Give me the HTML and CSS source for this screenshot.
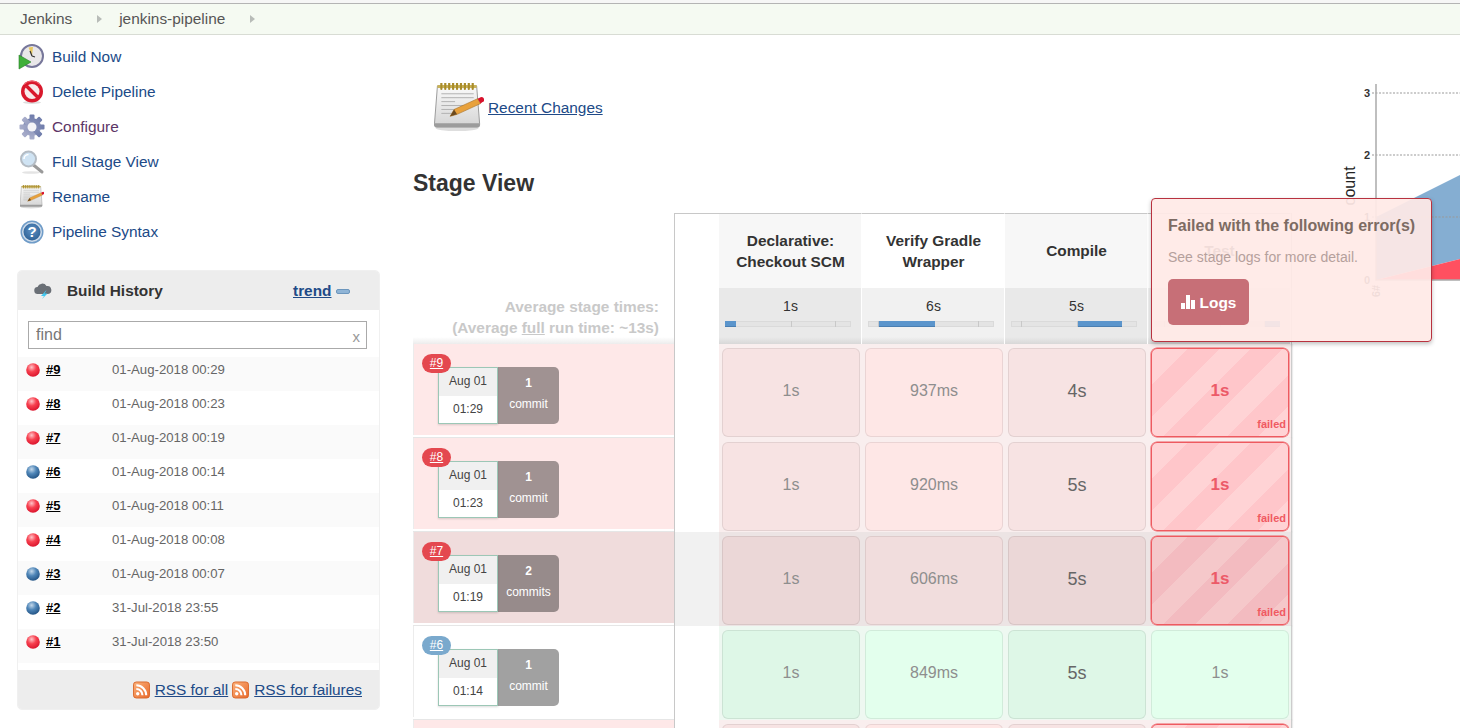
FILE: index.html
```html
<!DOCTYPE html>
<html lang="en">
<head>
<meta charset="utf-8">
<title>jenkins-pipeline</title>
<link rel="stylesheet" href="styles.css">
</head>
<body>
<svg class="defs" width="0" height="0" aria-hidden="true">
  <defs>
    <radialGradient id="ballRed" cx="40%" cy="30%" r="75%">
      <stop offset="0" stop-color="#ffc4c8"/><stop offset=".45" stop-color="#f7404f"/><stop offset="1" stop-color="#d8102a"/>
    </radialGradient>
    <radialGradient id="ballBlue" cx="40%" cy="30%" r="75%">
      <stop offset="0" stop-color="#c4d8ea"/><stop offset=".45" stop-color="#4f86b8"/><stop offset="1" stop-color="#1f4f80"/>
    </radialGradient>
    <linearGradient id="page" x1="0" y1="0" x2="0" y2="1">
      <stop offset="0" stop-color="#fafafa"/><stop offset="1" stop-color="#d4d4d4"/>
    </linearGradient>
    <linearGradient id="rssFill" x1="0" y1="0" x2="1" y2="1">
      <stop offset="0" stop-color="#fbb27c"/><stop offset="1" stop-color="#e8682a"/>
    </linearGradient>
    <linearGradient id="gearFill" x1="0" y1="0" x2="0" y2="1">
      <stop offset="0" stop-color="#6f7cab"/><stop offset="1" stop-color="#a9aecb"/>
    </linearGradient>
    <radialGradient id="helpFill" cx="50%" cy="40%" r="60%">
      <stop offset="0" stop-color="#5f93c6"/><stop offset="1" stop-color="#2f6296"/>
    </radialGradient>
    <symbol id="notepad" viewBox="0 0 50 50">
      <ellipse cx="23" cy="46" rx="22" ry="3" fill="#dedede"/>
      <path d="M3 3h40l3 38v2a2 2 0 0 1-2 2H2a2 2 0 0 1-2-2v-2z" fill="url(#page)" stroke="#9a9a9a"/>
      <path d="M0 41h46v2a2 2 0 0 1-2 2H2a2 2 0 0 1-2-2z" fill="#9c9c9c"/>
      <path d="M3 2h40v3H3z" fill="#c9b35a"/>
      <path d="M7 0v6M11 0v6M15 0v6M19 0v6M23 0v6M27 0v6M31 0v6M35 0v6M39 0v6" stroke="#a98c2a" stroke-width="2.2" stroke-linecap="round"/>
      <path d="M7 11h33M7 15h33M7 19h14M7 23h33M7 27h24M7 31h14" stroke="#b0b0b0" stroke-width="1"/>
      <path d="M16 34l4-7L44 16l3 5-24 11z" fill="#e8a13c" stroke="#a56b1e" stroke-width=".6"/>
      <path d="M16 34l4-7 3 5z" fill="#6b4a20"/>
      <path d="M44 16l3-1.500a2.600 2.600 0 0 1 2 5L47 21z" fill="#d8122c"/>
    </symbol>
    <symbol id="rss" viewBox="0 0 18 18">
      <rect x=".5" y=".5" width="17" height="17" rx="3" fill="url(#rssFill)" stroke="#d9682c"/>
      <circle cx="5" cy="13" r="1.800" fill="#fff"/>
      <path d="M3.500 8a6.500 6.500 0 0 1 6.500 6.500M3.500 4a10.500 10.500 0 0 1 10.500 10.500" fill="none" stroke="#fff" stroke-width="2.200"/>
    </symbol>
    <symbol id="ball-red" viewBox="0 0 14 14"><circle cx="7" cy="7" r="6.800" fill="url(#ballRed)"/></symbol>
    <symbol id="ball-blue" viewBox="0 0 14 14"><circle cx="7" cy="7" r="6.800" fill="url(#ballBlue)"/></symbol>
  </defs>
</svg>

<div class="top-rule"></div>
<nav class="crumbs">
  <span class="crumb">Jenkins</span><span class="crumb-arrow"></span>
  <span class="crumb">jenkins-pipeline</span><span class="crumb-arrow"></span>
</nav>

<div class="layout">
  <aside class="side">
    <ul class="tasks">
      <li class="task">
        <svg class="task-icon" viewBox="0 0 24 24">
          <circle cx="12" cy="11" r="11" fill="#e9e7e9" stroke="#77779a" stroke-width="2"/>
          <path d="M12 11L8.500 2.500A9 9 0 0 1 13 2z" fill="#e8c860"/>
          <path d="M12 11l-2-5M12 11l3 1" stroke="#333" stroke-width="1.200"/>
          <path d="M-1 10L11 17-1 24z" fill="#3fb03a" stroke="#2a7d28" stroke-width=".6"/>
        </svg>
        <a class="link" href="#">Build Now</a>
      </li>
      <li class="task">
        <svg class="task-icon" viewBox="0 0 24 24">
          <ellipse cx="12" cy="22.500" rx="9" ry="1.500" fill="#ddd"/>
          <circle cx="12" cy="11.500" r="11" fill="#d9182c"/>
          <circle cx="12" cy="11.500" r="7.500" fill="#f8eaea"/>
          <path d="M6.500 6L17.500 17" stroke="#d9182c" stroke-width="3.400"/>
          <path d="M4 4.500A11 11 0 0 1 20 4.500" fill="none" stroke="#f0626e" stroke-width="1"/>
        </svg>
        <a class="link" href="#">Delete Pipeline</a>
      </li>
      <li class="task">
        <svg class="task-icon" viewBox="0 0 24 24">
          <g fill="url(#gearFill)">
            <circle cx="12" cy="12" r="9"/>
            <rect x="9.500" y="-.5" width="5" height="25" rx="1"/>
            <rect x="9.500" y="-.5" width="5" height="25" rx="1" transform="rotate(45 12 12)"/>
            <rect x="9.500" y="-.5" width="5" height="25" rx="1" transform="rotate(90 12 12)"/>
            <rect x="9.500" y="-.5" width="5" height="25" rx="1" transform="rotate(135 12 12)"/>
          </g>
          <circle cx="12" cy="12" r="4.500" fill="#f4f4f8"/>
        </svg>
        <a class="link visited" href="#">Configure</a>
      </li>
      <li class="task">
        <svg class="task-icon" viewBox="0 0 24 24">
          <ellipse cx="11" cy="22.500" rx="9" ry="1.300" fill="#e4e4e4"/>
          <path d="M13.500 15L22 22" stroke="#9a9a9a" stroke-width="3" stroke-linecap="round"/>
          <circle cx="8.500" cy="9" r="7.500" fill="#cfe3f3" stroke="#b4bcc4" stroke-width="2"/>
          <path d="M4 9a4.500 4.500 0 0 1 4.500-4.500" fill="none" stroke="#fff" stroke-width="1.500"/>
        </svg>
        <a class="link" href="#">Full Stage View</a>
      </li>
      <li class="task">
        <svg class="task-icon"><use href="#notepad"/></svg>
        <a class="link" href="#">Rename</a>
      </li>
      <li class="task">
        <svg class="task-icon" viewBox="0 0 24 24">
          <circle cx="12" cy="12" r="11.500" fill="#6f9cc8"/>
          <circle cx="12" cy="12" r="10" fill="#cfdcea"/>
          <circle cx="12" cy="12" r="8.500" fill="url(#helpFill)"/>
          <text class="help-mark" x="12" y="17" text-anchor="middle">?</text>
        </svg>
        <a class="link" href="#">Pipeline Syntax</a>
      </li>
    </ul>

    <section class="history">
      <header class="history-head">
        <svg class="cloud" viewBox="0 0 18 16">
          <path d="M4 11a3.500 3.500 0 0 1-.5-7A5 5 0 0 1 12.500 3 4 4 0 0 1 14 11z" fill="#6a6f76"/>
          <path d="M12 7.500L7 13h3l-2 3 5.500-5.500h-3l2-3z" fill="#3fc8f0"/>
        </svg>
        <span class="history-title">Build History</span>
        <a class="trend" href="#">trend</a>
        <span class="trend-mark"></span>
      </header>
      <div class="search">
        <input class="search-input" type="text" placeholder="find">
        <span class="search-clear">x</span>
      </div>
      <ul class="builds">
        <li class="hrow"><svg class="ball"><use href="#ball-red"/></svg><a class="hnum" href="#">#9</a><span class="hdate">01-Aug-2018 00:29</span></li>
        <li class="hrow"><svg class="ball"><use href="#ball-red"/></svg><a class="hnum" href="#">#8</a><span class="hdate">01-Aug-2018 00:23</span></li>
        <li class="hrow"><svg class="ball"><use href="#ball-red"/></svg><a class="hnum" href="#">#7</a><span class="hdate">01-Aug-2018 00:19</span></li>
        <li class="hrow"><svg class="ball"><use href="#ball-blue"/></svg><a class="hnum" href="#">#6</a><span class="hdate">01-Aug-2018 00:14</span></li>
        <li class="hrow"><svg class="ball"><use href="#ball-red"/></svg><a class="hnum" href="#">#5</a><span class="hdate">01-Aug-2018 00:11</span></li>
        <li class="hrow"><svg class="ball"><use href="#ball-red"/></svg><a class="hnum" href="#">#4</a><span class="hdate">01-Aug-2018 00:08</span></li>
        <li class="hrow"><svg class="ball"><use href="#ball-blue"/></svg><a class="hnum" href="#">#3</a><span class="hdate">01-Aug-2018 00:07</span></li>
        <li class="hrow"><svg class="ball"><use href="#ball-blue"/></svg><a class="hnum" href="#">#2</a><span class="hdate">31-Jul-2018 23:55</span></li>
        <li class="hrow"><svg class="ball"><use href="#ball-red"/></svg><a class="hnum" href="#">#1</a><span class="hdate">31-Jul-2018 23:50</span></li>
      </ul>
      <footer class="history-foot">
        <svg class="rss"><use href="#rss"/></svg><a class="plain-link" href="#">RSS for all</a>
        <svg class="rss rss-second"><use href="#rss"/></svg><a class="plain-link" href="#">RSS for failures</a>
      </footer>
    </section>
  </aside>

  <main class="main">
    <div class="recent">
      <svg class="recent-icon"><use href="#notepad"/></svg>
      <a class="plain-link" href="#">Recent Changes</a>
    </div>
    <h2 class="stage-title">Stage View</h2>

    <div class="stage">
      <div class="grid-row names">
        <div></div>
        <div class="blank"></div>
        <div class="name odd">Declarative:<br>Checkout SCM</div>
        <div class="name">Verify Gradle<br>Wrapper</div>
        <div class="name odd">Compile</div>
        <div class="name">Test</div>
      </div>
      <div class="grid-row avgs">
        <div class="avg-label">Average stage times:<br>(Average <u>full</u> run time: ~13s)</div>
        <div class="blank"></div>
        <div class="avg odd">1s<div class="bar"><i class="seg fill" style="width:8.7%"></i><i class="seg" style="width:44.4%"></i><i class="seg" style="width:35%"></i><i class="seg" style="width:11.9%"></i></div></div>
        <div class="avg">6s<div class="bar"><i class="seg" style="width:8.7%"></i><i class="seg fill" style="width:44.4%"></i><i class="seg" style="width:35%"></i><i class="seg" style="width:11.9%"></i></div></div>
        <div class="avg odd">5s<div class="bar"><i class="seg" style="width:8.7%"></i><i class="seg" style="width:44.4%"></i><i class="seg fill" style="width:35%"></i><i class="seg" style="width:11.9%"></i></div></div>
        <div class="avg">1s<div class="bar"><i class="seg" style="width:8.7%"></i><i class="seg" style="width:44.4%"></i><i class="seg" style="width:35%"></i><i class="seg fill" style="width:11.9%"></i></div></div>
      </div>

      <div class="grid-row run failed">
        <div class="build"><a class="badge" href="#">#9</a><div class="card"><div class="when"><span class="day">Aug 01</span><span class="time">01:29</span></div><div class="commits"><b>1</b><span>commit</span></div></div></div>
        <div class="blank"></div>
        <div class="cell odd"><div class="box">1s</div></div>
        <div class="cell"><div class="box">937ms</div></div>
        <div class="cell odd"><div class="box big">4s</div></div>
        <div class="cell"><div class="box bad">1s<span class="bad-tag">failed</span></div></div>
      </div>
      <div class="grid-row run failed">
        <div class="build"><a class="badge" href="#">#8</a><div class="card"><div class="when"><span class="day">Aug 01</span><span class="time">01:23</span></div><div class="commits"><b>1</b><span>commit</span></div></div></div>
        <div class="blank"></div>
        <div class="cell odd"><div class="box">1s</div></div>
        <div class="cell"><div class="box">920ms</div></div>
        <div class="cell odd"><div class="box big">5s</div></div>
        <div class="cell"><div class="box bad">1s<span class="bad-tag">failed</span></div></div>
      </div>
      <div class="grid-row run failed hover">
        <div class="build"><a class="badge" href="#">#7</a><div class="card"><div class="when"><span class="day">Aug 01</span><span class="time">01:19</span></div><div class="commits"><b>2</b><span>commits</span></div></div></div>
        <div class="blank"></div>
        <div class="cell odd"><div class="box">1s</div></div>
        <div class="cell"><div class="box">606ms</div></div>
        <div class="cell odd"><div class="box big">5s</div></div>
        <div class="cell"><div class="box bad">1s<span class="bad-tag">failed</span></div></div>
      </div>
      <div class="grid-row run ok">
        <div class="build"><a class="badge blue" href="#">#6</a><div class="card"><div class="when"><span class="day">Aug 01</span><span class="time">01:14</span></div><div class="commits"><b>1</b><span>commit</span></div></div></div>
        <div class="blank"></div>
        <div class="cell odd"><div class="box">1s</div></div>
        <div class="cell"><div class="box">849ms</div></div>
        <div class="cell odd"><div class="box big">5s</div></div>
        <div class="cell"><div class="box">1s</div></div>
      </div>
      <div class="grid-row run failed">
        <div class="build"><a class="badge" href="#">#5</a><div class="card"><div class="when"><span class="day">Aug 01</span><span class="time">01:11</span></div><div class="commits"><b>1</b><span>commit</span></div></div></div>
        <div class="blank"></div>
        <div class="cell odd"><div class="box">1s</div></div>
        <div class="cell"><div class="box">900ms</div></div>
        <div class="cell odd"><div class="box big">5s</div></div>
        <div class="cell"><div class="box bad">1s<span class="bad-tag">failed</span></div></div>
      </div>
    </div>

    <svg class="chart" viewBox="0 0 120 220">
      <path d="M36 137L120 95V179L36 200z" fill="#85aed2"/>
      <path d="M36 200L120 179V200z" fill="#ff5060"/>
      <path d="M32 13H120M32 75H120M32 137H120" stroke="#999" stroke-width="1" stroke-dasharray="2 1.500"/>
      <path d="M36 4V200H120" fill="none" stroke="#aaa" stroke-width="1.500"/>
      <text class="chart-num" x="30" y="17" text-anchor="end">3</text>
      <text class="chart-num" x="30" y="79" text-anchor="end">2</text>
      <text class="chart-num" x="30" y="141" text-anchor="end">1</text>
      <text class="chart-num" x="30" y="204" text-anchor="end">0</text>
      <text class="chart-num" transform="translate(32 205) rotate(90)">#9</text>
      <text class="chart-label" transform="translate(15 106) rotate(-90)" text-anchor="middle">count</text>
    </svg>

    <div class="tip">
      <div class="tip-title">Failed with the following error(s)</div>
      <div class="tip-text">See stage logs for more detail.</div>
      <a class="tip-btn" href="#">
        <svg class="tip-bars" viewBox="0 0 14 14"><path d="M0 8h4v6H0zM5 0h4v14H5zM10 5h4v9h-4z" fill="#fff"/></svg>
        Logs
      </a>
    </div>
  </main>
</div>
</body>
</html>
```

FILE: styles.css
```css
* { box-sizing: border-box; }
html, body { margin: 0; height: 728px; overflow: hidden; background: #fff; }
body { font: 15.4px/20px "Liberation Sans", Arial, sans-serif; color: #333; }
ul { list-style: none; margin: 0; padding: 0; }
.defs { position: absolute; }

.top-rule { height: 4px; background: #f6f6f6; border-bottom: 1px solid #b4b4b4; }
.crumbs {
  display: flex; align-items: center; height: 31px; padding-left: 20px;
  background: #f5faf2; border-bottom: 1px solid #d8dcd4; color: #555;
}
.crumb-arrow {
  width: 0; height: 0; margin: 0 17px 0 25px;
  border-left: 5px solid #b8bcb8; border-top: 4px solid transparent; border-bottom: 4px solid transparent;
}

.layout { display: flex; }
.side { width: 413px; flex: none; padding-top: 4px; }
.task { display: flex; align-items: center; gap: 8px; height: 35px; padding-left: 20px; }
.task-icon { width: 24px; height: 24px; flex: none; overflow: visible; }
.link { color: #204a87; text-decoration: none; }
.visited { color: #5c3566; }
.plain-link { color: #204a87; text-decoration: underline; }
.help-mark { font: bold 15px "Liberation Sans", sans-serif; fill: #fff; }

.history {
  width: 363px; margin: 21px 0 0 17px; border: 1px solid #f0f0f0; border-radius: 5px; overflow: hidden;
}
.history-head {
  display: flex; align-items: center; height: 40px; margin-top: -1px; padding: 2px 0 0 16px; background: #ededed;
}
.cloud { width: 18px; height: 16px; margin-right: 15px; flex: none; }
.history-title { font-weight: bold; width: 226px; flex: none; }
.trend { font-weight: bold; color: #204a87; text-decoration: underline; }
.trend-mark {
  width: 14px; height: 5px; margin-left: 5px; border-radius: 2px; background: #8fb4d6; border: 1px solid #6c96bd;
}
.search { position: relative; margin: 11px 12px 8px 10px; }
.search-input {
  display: block; width: 100%; height: 28px; padding: 0 7px; border: 1px solid #aaa; border-radius: 0;
  font: 16px "Liberation Sans", sans-serif; color: #333; outline: none;
}
.search-input::placeholder { color: #777; opacity: 1; }
.search-clear { position: absolute; right: 7px; top: 6px; color: #999; font-size: 15px; }
.hrow {
  display: grid; grid-template-columns: 14px 60px 1fr; column-gap: 6px; height: 34px;
  padding: 5px 0 0 8px; font-size: 13px; line-height: 15px;
}
.hrow:nth-child(odd) { background: #fafafa; }
.ball { width: 14px; height: 14px; margin-top: 1px; }
.hnum { font-weight: bold; color: #000; text-decoration: underline; }
.hdate { color: #666; font-size: 13.2px; }
.history-foot {
  display: flex; align-items: center; justify-content: flex-end; height: 40px; margin-top: 7px; margin-bottom: -1px;
  padding-right: 17px; background: #ededed;
}
.rss { width: 17px; height: 18px; margin-right: 5px; flex: none; }
.rss-second { margin-left: 4px; }

.main { position: relative; flex: 1; min-width: 0; }
.recent { display: flex; align-items: center; gap: 5px; height: 49px; margin: 48px 0 0 21px; }
.recent-icon { width: 50px; height: 49px; flex: none; margin-right: -1px; overflow: visible; }
.stage-title { margin: 37px 0 16px; font-size: 23px; line-height: 28px; font-weight: bold; color: #333; }

.stage { width: 878px; }
.grid-row { display: grid; grid-template-columns: 261px 45px repeat(4, 143px); }
.blank { border-left: 1px solid #c8c8c8; background: #fff; }
.names { height: 75px; }
.names .blank { border-top: 1px solid #c8c8c8; }
.name {
  display: flex; align-items: center; justify-content: center; text-align: center; padding: 0 0 1px 1px;
  border-top: 1px solid #c8c8c8; border-right: 1px solid #fff;
  font-weight: bold; line-height: 21px; background: #fff;
}
.name.odd { background: #f7f7f7; }
.name:last-child { box-shadow: 1px 0 0 #c8c8c8; }
.avgs { height: 56px; }
.avg-label {
  text-align: right; padding: 8px 15px 0 0; font-weight: bold; line-height: 21px; color: #c9c9c9;
  background: linear-gradient(#fff 49px, #ececec);
}
.avg-label u { text-decoration: underline; }
.avg {
  padding: 8px 0 0 1px; text-align: center; font-size: 14px; line-height: 20px; border-right: 1px solid #fff;
  background: linear-gradient(#f1f1f1 49px, #dcdcdc);
}
.avg.odd { background: linear-gradient(#e9e9e9 49px, #d8d8d8); }
.avg:last-child { box-shadow: 1px 0 0 #d0d0d0; }
.bar { display: flex; width: 126px; height: 6px; margin: 5px 0 0 5px; background: #e4e4e4; box-shadow: inset 0 0 0 1px #dadada; }
.seg { display: block; height: 100%; border-right: 1px solid #c8c8c8; }
.seg:last-child { border-right: 0; }
.seg.fill { background: #5b95cc; border-right: 0; box-shadow: inset 0 -1px 0 #4a7fb2; }

.run { height: 94px; }
.build {
  position: relative; height: 91px; padding: 23px 0 0 24px; border-left: 1px solid #ececec;
  box-shadow: 0 2px 0 #fff, 0 3px 0 #e6e6e6;
}
.badge {
  position: absolute; left: 8px; top: 10px; z-index: 1; width: 29px; height: 19px; border-radius: 10px;
  text-align: center; font-size: 12px; font-weight: normal; line-height: 18px; color: #fff; text-decoration: underline; background: #e4484f;
}
.badge.blue { background: #7aa9cd; }
.card { display: flex; width: 121px; height: 57px; }
.when {
  display: flex; flex-direction: column; width: 60px; border: 1px solid #9cc7b6; font-size: 12px; text-align: center;
  color: #444; background: #fff; box-shadow: 0 1px 2px rgba(0,0,0,.15);
}
.day { height: 28px; line-height: 26px; background: #f0f0f0; }
.time { line-height: 27px; }
.commits {
  display: flex; flex-direction: column; align-items: center; width: 61px; padding-top: 6px; font-size: 12px; line-height: 22px;
  color: #fff; background: rgba(0,0,0,.37); border-radius: 0 5px 5px 0;
}
.commits b { line-height: 20px; }
.cell { padding: 4px 2px 1px 3px; }
.cell:last-child { box-shadow: 1px 0 0 #ccc, 2px 0 1px rgba(0,0,0,.08); }
.box {
  position: relative; display: flex; align-items: center; justify-content: center; height: 89px; padding-bottom: 4px;
  border: 1px solid rgba(0,0,0,.08); border-radius: 6px; font-size: 16px; color: #8e8e8e;
}
.box.big { font-size: 18px; color: #666; }
.box.bad {
  border-color: #ee5a60; box-shadow: 0 0 0 .5px #ee5a60; font-size: 17px; font-weight: bold; color: #ec5a68;
  background: repeating-linear-gradient(135deg, #ffc6ca -19.8px, #ffc6ca 2.6px, #ffd3d5 2.6px, #ffd3d5 25px);
}
.bad-tag { position: absolute; right: 2px; bottom: 5px; font-size: 11px; line-height: 13px; color: #f05a62; }

.failed .build { background: #fee8e8; }
.failed .cell { background: #f9eeee; }
.failed .cell .box { background-color: #fee7e6; }
.failed .cell.odd .box { background-color: #f7e3e3; }
.failed .cell .box.bad { background-color: transparent; }
.hover .build { background: #f0dcdc; }
.hover .blank { background: #f1f1f1; }
.hover .cell { background: #ece4e4; }
.hover .cell .box { background-color: #f1dddd; }
.hover .cell.odd .box { background-color: #ebd7d7; }
.hover .box.bad { background: repeating-linear-gradient(135deg, #f3bbc0 -19.8px, #f3bbc0 2.6px, #f5c8ca 2.6px, #f5c8ca 25px); }
.ok .build { background: #fff; }
.ok .cell { background: #eef8f1; }
.ok .cell .box { background-color: #e3ffed; }
.ok .cell.odd .box { background-color: #def7e7; }

.chart { position: absolute; right: 0; top: 45px; width: 120px; height: 220px; }
.chart-num { font: bold 11px "Liberation Sans", sans-serif; fill: #333; }
.chart-label { font: 16px "Liberation Sans", sans-serif; fill: #222; }

.tip {
  position: absolute; left: 738px; top: 163px; width: 281px; height: 144px; padding: 17px 16px 0;
  border: 1px solid #b8323f; border-radius: 4px; background: rgba(255,233,230,.93); box-shadow: 0 2px 4px rgba(0,0,0,.25);
}
.tip-title { font-size: 16px; line-height: 20px; font-weight: bold; color: #7d6b63; white-space: nowrap; }
.tip-text { margin-top: 11px; font-size: 14px; line-height: 20px; color: #b5a09c; }
.tip-btn {
  display: flex; align-items: center; justify-content: center; gap: 5px; width: 81px; height: 46px; margin-top: 12px; padding-top: 2px;
  border-radius: 5px; background: #c76f77; color: #fff; font-weight: bold; text-decoration: none;
}
.tip-bars { width: 14px; height: 14px; margin-top: -2px; }
```
